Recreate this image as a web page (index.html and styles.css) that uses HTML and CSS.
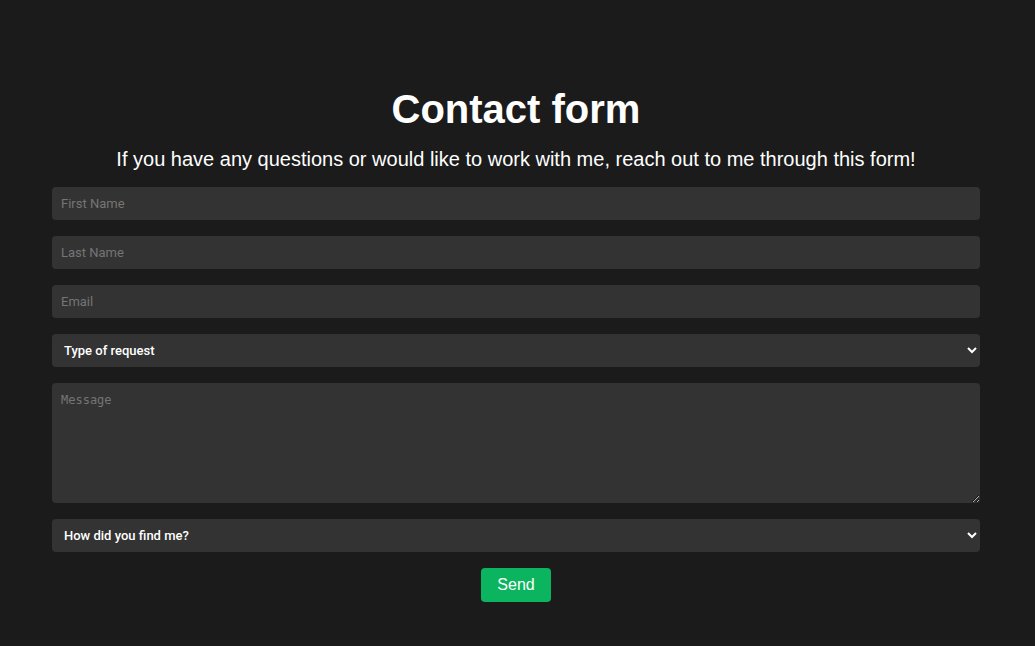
FILE: index.html
```html
<!DOCTYPE html>
<html lang="en">
<head>
<meta charset="utf-8">
<title>Contact form</title>
<link rel="stylesheet" href="styles.css">
</head>
<body>
<main class="page">
  <h1 class="title">Contact form</h1>
  <p class="lead">If you have any questions or would like to work with me, reach out to me through this form!</p>
  <form class="form">
    <input class="field" type="text" placeholder="First Name">
    <input class="field" type="text" placeholder="Last Name">
    <input class="field" type="email" placeholder="Email">
    <select class="field select">
      <option>Type of request</option>
    </select>
    <textarea class="field area" placeholder="Message"></textarea>
    <select class="field select">
      <option>How did you find me?</option>
    </select>
    <button class="send" type="button">Send</button>
  </form>
</main>
</body>
</html>
```
FILE: styles.css
```css
html, body {
  margin: 0;
  padding: 0;
  background: #1b1b1b;
  color: #ffffff;
  font-family: "Liberation Sans", Arial, sans-serif;
}
.page {
  width: 928px;
  margin: 0 0 0 52px;
  padding-top: 86px;
  display: flex;
  flex-direction: column;
  align-items: center;
}
.title {
  margin: 0;
  font-size: 40px;
  font-weight: 700;
  line-height: 46px;
}
.lead {
  margin: 15px 0 0;
  font-size: 20px;
  line-height: 24px;
}
.form {
  width: 100%;
  margin-top: 16px;
  display: flex;
  flex-direction: column;
  gap: 16px;
  align-items: center;
}
.field {
  box-sizing: border-box;
  width: 100%;
  height: 33px;
  margin: 0;
  border: none;
  border-radius: 4px;
  background: #333333;
  color: #ffffff;
  padding: 0 9px;
  font-family: Roboto, "Liberation Sans", Arial, sans-serif;
  font-size: 13px;
  outline: none;
}
.field::placeholder {
  color: #757575;
}
.select {
  font-family: Roboto, "Liberation Sans", Arial, sans-serif;
  font-weight: 500;
  font-size: 13px;
  padding: 0 8px;
}
.area {
  height: 120px;
  padding: 10px 9px;
  font-family: "DejaVu Sans Mono", monospace;
  font-size: 12px;
  resize: vertical;
}
.send {
  width: 70px;
  height: 34px;
  border: none;
  border-radius: 4px;
  background: #0bb45e;
  color: #ffffff;
  font-family: "Liberation Sans", Arial, sans-serif;
  font-size: 16px;
  cursor: pointer;
}
```
